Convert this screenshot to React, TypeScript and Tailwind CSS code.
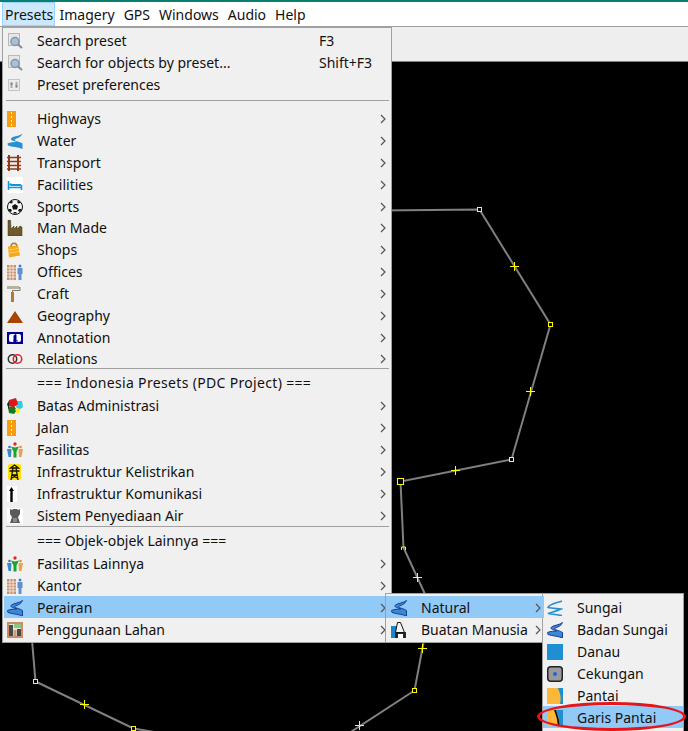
import type { ReactNode } from "react";

type IconName =
  | "search" | "prefs" | "highway" | "water" | "badan" | "transport" | "facilities" | "sports" | "manmade"
  | "shops" | "offices" | "craft" | "geography" | "annotation" | "relations" | "batas" | "fasilitas"
  | "listrik" | "komunikasi" | "air" | "lahan" | "buatan" | "sungai" | "danau" | "cekungan"
  | "pantai" | "garis";

const swoosh =
  "M15.500 .5C13 3 7 3 4.500 5 3 6.500 5 7.500 7 8L10 8.800C8 9.500 3 9 .5 10.500L1 12.500C5 14 11 14 15.500 16V10.500C13 9 11 8.500 9.500 8 7.500 7.500 7 6.500 8.500 6 11 5 14 4 15.500 .5z";

const glyphs: Record<IconName, ReactNode> = {
  search: (
    <>
      <rect x="1.500" y=".5" width="11" height="12" fill="#e6e6e6" stroke="#b8b8b8" />
      <circle cx="8" cy="8.500" r="4" fill="#a9c0d8" stroke="#8296aa" strokeWidth="1.500" />
      <path d="M11 11.500l4 3.500" stroke="#8a8a8a" strokeWidth="2" />
    </>
  ),
  prefs: (
    <>
      <rect x="1.500" y="2.500" width="11" height="11" fill="#ececec" stroke="#c4c4c4" />
      <path d="M4.500 5v6M9.500 5v6" stroke="#a8a8a8" strokeWidth="2" />
      <path d="M3.500 7h2M8.500 9h2" stroke="#666" />
    </>
  ),
  highway: (
    <>
      <rect x="0" y="0" width="9" height="16" fill="#f59e12" />
      <path d="M4.500 1v14" stroke="#fff2b0" strokeDasharray="2 2" />
    </>
  ),
  water: <path d={swoosh} fill="#2a8fd0" />,
  badan: <path d={swoosh} fill="#3a88d0" stroke="#1a3f9c" strokeWidth="1" />,
  transport: (
    <>
      <path d="M2 0v16M11 0v16" stroke="#8f3a14" strokeWidth="2" />
      <path d="M0 2.500h14M0 6.500h14M0 10.500h14M0 14h14" stroke="#8f3a14" strokeWidth="1.500" />
    </>
  ),
  facilities: (
    <>
      <rect width="16" height="16" rx="1" fill="#fff" />
      <path d="M1.500 4v9M14.500 8v5M1.500 10.500h13" stroke="#1296db" strokeWidth="1.600" />
      <rect x="4" y="7" width="10" height="2" fill="#1296db" />
      <circle cx="3.500" cy="7.500" r="1.200" fill="#1296db" />
    </>
  ),
  sports: (
    <>
      <circle cx="8" cy="8" r="7.500" fill="#f4f4f4" stroke="#111" />
      <path d="M8 5l3 2-1 3.500H6L5 7z" fill="#111" />
      <path d="M2 4l2-2 2 .5-1 2zM14 4l-2-2-2 .5 1 2zM1 10l2 3 2-1-1-2zM15 10l-2 3-2-1 1-2zM6 14.500h4L9 13H7z" fill="#111" />
    </>
  ),
  manmade: (
    <path d="M1 0h2.500l.5 9 3-3v3l3-3v3l3-3 2 1v9H1z" fill="#6e5a2a" stroke="#3d3216" strokeWidth=".5" />
  ),
  shops: (
    <>
      <path d="M4 5c0-5 6-5 6 0" fill="none" stroke="#a87c2a" strokeWidth="1.500" />
      <path d="M1 4.500l10-1 2 10-11 2z" fill="#f7a81b" />
      <path d="M2 8l9.500-1.500M2 11l10-1.500" stroke="#ffd265" />
    </>
  ),
  offices: (
    <>
      <rect x="0" y="1" width="9" height="15" fill="#c98d68" />
      <path d="M3 1v15M6 1v15M0 4h9M0 7h9M0 10h9M0 13h9" stroke="#f0e5dc" />
      <circle cx="13" cy="2" r="1.500" fill="#4a7ec2" />
      <path d="M10.500 4h5v6h-1v6h-3v-6h-1z" fill="#5f90d0" />
    </>
  ),
  craft: (
    <>
      <rect x="0" y="0" width="12" height="3" fill="#b7b39a" />
      <path d="M12 1.500h1v3H5.500v2" fill="none" stroke="#777" />
      <rect x="4" y="6" width="3" height="10" fill="#b07a30" />
    </>
  ),
  geography: <path d="M8 3l8 12H0z" fill="#a84300" />,
  annotation: (
    <>
      <rect width="16" height="12" y="2" fill="#000099" />
      <rect x="2" y="4" width="12" height="8" rx="2" fill="#fff" />
      <path d="M7 5.500l2-1v7H7zM6 11h5" fill="#000099" stroke="#000099" />
    </>
  ),
  relations: (
    <>
      <circle cx="5.500" cy="8" r="4.200" fill="none" stroke="#333" strokeWidth="1.500" />
      <circle cx="10.500" cy="8" r="4.200" fill="none" stroke="#ee1c25" strokeWidth="1.500" />
    </>
  ),
  batas: (
    <>
      <path d="M10 3l5 0 1 6-4 3-3-3z" fill="#35c8e8" />
      <path d="M1 9l6-1 3 4-3 4-5-1z" fill="#157a1e" />
      <path d="M2 2l7-2 2 6-4 3-6-1z" fill="#de1616" />
      <path d="M8 11l4-1 1 4-3 2z" fill="#ffe925" />
      <path d="M0 6l2-3v9z" fill="#222" />
    </>
  ),
  fasilitas: (
    <>
      <circle cx="8" cy="2" r="1.700" fill="#e22" />
      <path d="M4 4.500l4 1 4-1-2.500 5v6H6.500v-6z" fill="#1ca32f" />
      <circle cx="2.500" cy="5" r="1.300" fill="#3a6fc0" />
      <path d="M0 7h4.500L4 15H1.500z" fill="#3a8ac9" />
      <circle cx="13.500" cy="5" r="1.300" fill="#e8912a" />
      <path d="M11.500 7H16l-1.500 8H12z" fill="#eda24a" />
    </>
  ),
  listrik: (
    <>
      <rect x="1" y="0" width="13" height="16" rx="2" fill="#ffe100" />
      <path d="M7.500 1l4 3h-8zM2.500 7h10M6 4L4 16M9 4l2 12M5 11h5M5 14l5-3M10 14l-5-3" fill="none" stroke="#111" strokeWidth="1.300" />
    </>
  ),
  komunikasi: (
    <>
      <rect x="0" y="0" width="10" height="16" fill="#fff" />
      <path d="M4.500 3v13" stroke="#000" strokeWidth="2.400" />
      <path d="M2 5l2.500-4L7 5z" fill="#000" />
    </>
  ),
  air: (
    <>
      <rect width="16" height="16" rx="1" fill="#fff" />
      <path d="M3 1l2 1 1-1h4l1 1 2-1v5l-2 3 2 6H3l2-6-2-3z" fill="#5a5a5a" />
      <path d="M6 11h4M6 13h4" stroke="#bbb" />
    </>
  ),
  lahan: (
    <>
      <rect width="16" height="16" fill="#c98d68" />
      <rect x="2" y="2" width="12" height="12" fill="#e9e6d8" />
      <rect x="7" y="2" width="7" height="4" fill="#8cc77b" />
      <rect x="2" y="3" width="4" height="11" fill="#4a4a44" />
      <rect x="10" y="7" width="4" height="7" fill="#4a4a44" />
      <rect x="6.500" y="8" width="3" height="6" fill="#cf9a82" />
    </>
  ),
  buatan: (
    <>
      <rect x="0" y="4" width="6" height="12" fill="#1c86cc" />
      <rect x="4" y="10" width="11" height="6" fill="#1b2a3a" />
      <path d="M6.500 .5h3l4 10h-9z" fill="#f4f4f4" stroke="#111" />
      <rect x="7" y="12" width="5" height="4" fill="#fff" />
    </>
  ),
  sungai: (
    <path d="M15 1C10 3 2 4 1 7.500c4 1 9 1 13 1.500-4 2-9 3-13 4.500l14 2" fill="none" stroke="#2a8fd0" strokeWidth="1.600" />
  ),
  danau: <rect width="16" height="16" fill="#1f8fd3" />,
  cekungan: (
    <>
      <rect x=".75" y=".75" width="14.500" height="14.500" rx="3" fill="#9a9a9a" stroke="#222" strokeWidth="1.500" />
      <circle cx="8" cy="8" r="2" fill="#1e63e0" />
    </>
  ),
  pantai: (
    <>
      <rect width="16" height="16" fill="#1f8fd3" />
      <path d="M0 0h11c1 4 4 7 2 16H0z" fill="#fdb83a" />
    </>
  ),
  garis: (
    <>
      <path d="M0 0h9c1 4 4 7 3 16H0z" fill="#fdb83a" />
      <path d="M9 0h7v16h-4c1-9-2-12-3-16z" fill="#1f8fd3" />
      <path d="M8 0c1 4 4 8 3.500 16" fill="none" stroke="#111" strokeWidth="1.800" />
    </>
  ),
};

function Icon({ name }: { name?: IconName }) {
  if (!name) return <span className="block w-4 h-4" />;
  return (
    <svg width="16" height="16" viewBox="0 0 16 16" className="block">
      {glyphs[name]}
    </svg>
  );
}

function Arrow() {
  return (
    <svg width="6" height="10" viewBox="0 0 6 10" className="block">
      <path d="M1 1l4 4-4 4" fill="none" stroke="#555" strokeWidth="1.200" />
    </svg>
  );
}

type Row = {
  label?: string;
  icon?: IconName;
  shortcut?: string;
  sub?: boolean;
  sep?: string;
  active?: boolean;
  height?: string;
  tracking?: string;
};

const presetRows: Row[] = [
  { label: "Search preset", icon: "search", shortcut: "F3" },
  { label: "Search for objects by preset...", icon: "search", shortcut: "Shift+F3" },
  { label: "Preset preferences", icon: "prefs" },
  { sep: "mt-[5px] h-[7px]" },
  { label: "Highways", icon: "highway", sub: true },
  { label: "Water", icon: "water", sub: true },
  { label: "Transport", icon: "transport", sub: true },
  { label: "Facilities", icon: "facilities", sub: true },
  { label: "Sports", icon: "sports", sub: true },
  { label: "Man Made", icon: "manmade", sub: true, height: "h-[21px] pt-[1px]" },
  { label: "Shops", icon: "shops", sub: true },
  { label: "Offices", icon: "offices", sub: true },
  { label: "Craft", icon: "craft", sub: true },
  { label: "Geography", icon: "geography", sub: true },
  { label: "Annotation", icon: "annotation", sub: true },
  { label: "Relations", icon: "relations", sub: true, height: "h-[21px] pt-[1px]" },
  { sep: "-mt-[1px] h-[3px]" },
  { label: "=== Indonesia Presets (PDC Project) ===", height: "h-[23px] pt-[1px]", tracking: "tracking-[0.33px]" },
  { label: "Batas Administrasi", icon: "batas", sub: true },
  { label: "Jalan", icon: "highway", sub: true },
  { label: "Fasilitas", icon: "fasilitas", sub: true },
  { label: "Infrastruktur Kelistrikan", icon: "listrik", sub: true },
  { label: "Infrastruktur Komunikasi", icon: "komunikasi", sub: true },
  { label: "Sistem Penyediaan Air", icon: "air", sub: true },
  { sep: "h-[3px]" },
  { label: "=== Objek-objek Lainnya ===", height: "h-[23px] pt-[1px]" },
  { label: "Fasilitas Lainnya", icon: "fasilitas", sub: true },
  { label: "Kantor", icon: "offices", sub: true },
  { label: "Perairan", icon: "badan", sub: true, active: true },
  { label: "Penggunaan Lahan", icon: "lahan", sub: true },
];

const waterRows: Row[] = [
  { label: "Sungai", icon: "sungai" },
  { label: "Badan Sungai", icon: "badan" },
  { label: "Danau", icon: "danau" },
  { label: "Cekungan", icon: "cekungan" },
  { label: "Pantai", icon: "pantai" },
  { label: "Garis Pantai", icon: "garis", active: true },
];

function MenuRow({ row, pad = "pl-[3px] pr-[3px]" }: { row: Row; pad?: string }) {
  if (row.sep) {
    return (
      <div className={`${row.sep} pl-[2px]`}>
        <div className="h-px w-full bg-[#a0a0a0]" />
      </div>
    );
  }
  return (
    <div className={`flex items-center ${pad} ${row.height ?? "h-[22px] pt-[2px]"} ${row.active ? "bg-[#91c9f7]" : ""}`}>
      <span className="w-[30px] shrink-0">
        <Icon name={row.icon} />
      </span>
      <span className={`flex-1 whitespace-nowrap ${row.tracking ?? ""}`}>{row.label}</span>
      {row.shortcut && <span className="w-[67px] shrink-0">{row.shortcut}</span>}
      {row.sub && <Arrow />}
    </div>
  );
}

const menuBar = ["Imagery", "GPS", "Windows", "Audio", "Help"];

// centres of the way nodes on the map canvas
const squares = [
  [479.5, 209.5], [550.5, 324.5], [511.5, 459.5], [414.5, 690.5], [35.5, 681.5], [133.5, 728.5],
];
const crosses = [
  [514.5, 266.5], [530.5, 391.5], [455.5, 470.5], [417.5, 577.5], [422.5, 648.5], [359.5, 725.5], [84.5, 704.5],
];

function MapLines() {
  return (
    <svg width="688" height="731" viewBox="0 0 688 731" className="absolute left-0 top-0">
      <g fill="none" stroke="#808080" strokeWidth="2">
        <path d="M380 210.500 479.500 209.500 550.500 324.500 511.500 459.500 400.500 481.500 403.500 547.500 430 605" />
        <path d="M424 640 414.500 690.500 320 752" />
        <path d="M32 640 35.500 681.500 133.500 728.500 160 733" />
      </g>
      <g fill="#000" stroke="#ffff00">
        {squares.map(([x, y]) => (
          <rect key={`${x}-${y}`} x={x - 2} y={y - 2} width="4" height="4" />
        ))}
        <rect x="397.500" y="478.500" width="6" height="6" />
      </g>
      <path d="M401.500 550v-3h4v3" fill="none" stroke="#ffff00" />
      <g stroke="#ffff00">
        {crosses.map(([x, y]) => (
          <path key={`${x}-${y}`} d={`M${x - 4.5} ${y}h9M${x} ${y - 4.5}v9`} />
        ))}
      </g>
    </svg>
  );
}

export default function App() {
  return (
    <div className="relative w-[688px] h-[731px] overflow-hidden flex flex-col bg-black text-[14px] leading-none text-[#111] font-['Noto_Sans',sans-serif]">
      <div className="h-[2px] bg-[#0b7f6f]" />
      <div className="h-[25px] flex bg-white border-b border-[#a0a0a0] pl-[2px] items-stretch">
        <div className="w-[53px] flex items-center pl-[2px] pt-[1px] bg-[#cce8ff] border border-[#99d1ff]">Presets</div>
        {menuBar.map((label) => (
          <div key={label} className="flex items-center px-[4.5px] pt-[2px]">
            {label}
          </div>
        ))}
      </div>
      <div className="h-[35px] bg-[#eeeeee] border-b border-[#808080]" />
      <div className="flex-1 bg-black" />

      <MapLines />

      <div className="absolute left-[2px] top-[27px] w-[390px] h-[616px] bg-[#f0f0f0] border border-[#a0a0a0] pl-px pr-[2px] pt-[1px]">
        {presetRows.map((row, i) => (
          <MenuRow key={i} row={row} />
        ))}
      </div>

      <div className="absolute left-[385px] top-[593px] w-[158px] h-[50px] bg-[#f0f0f0] border border-[#a0a0a0] pt-[2px]">
        <div className="relative z-10 w-[158px]">
          <MenuRow row={{ label: "Natural", icon: "badan", sub: true, active: true }} pad="pl-[5px] pr-[3px]" />
        </div>
        <div className="relative z-10">
          <MenuRow row={{ label: "Buatan Manusia", icon: "buatan", sub: true }} pad="pl-[5px] pr-px" />
        </div>
      </div>

      <div className="absolute left-[542px] top-[593px] w-[142px] h-[140px] bg-[#f0f0f0] border border-[#a0a0a0] pt-[2px]">
        {waterRows.map((row) => (
          <MenuRow key={row.label} row={row} pad="pl-[4px] pr-[3px]" />
        ))}
      </div>

      <div className="absolute left-[537px] top-[702px] w-[149px] h-[29px] rounded-[50%] border-[3px] border-[#e8141c]" />
    </div>
  );
}
